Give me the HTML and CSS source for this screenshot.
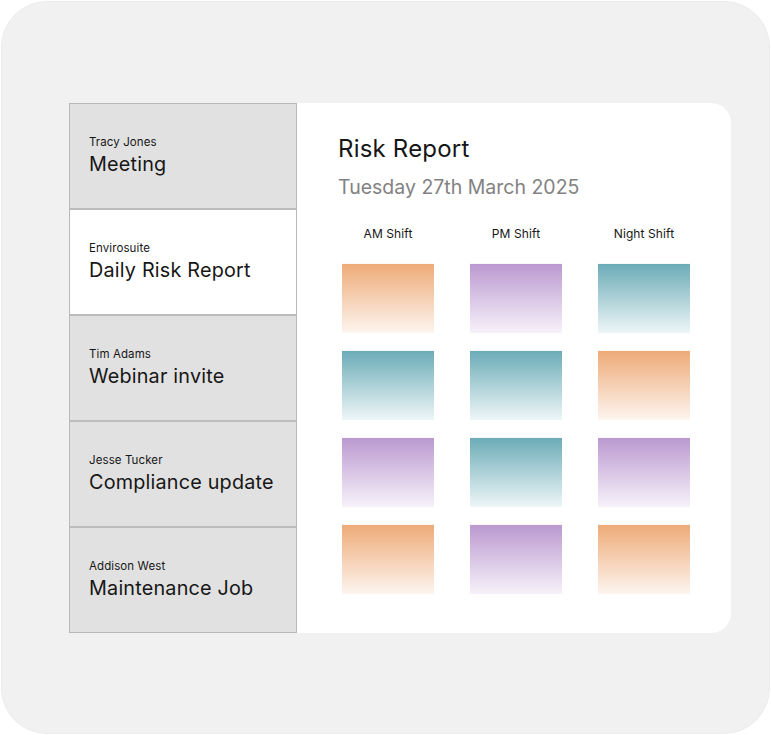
FILE: index.html
```html
<!DOCTYPE html>
<html>
<head>
<meta charset="utf-8">
<link rel="stylesheet" href="styles.css">
</head>
<body>
<div class="frame">
  <div class="app">
    <ul class="inbox">
      <li class="item"><span class="from">Tracy Jones</span><span class="subject">Meeting</span></li>
      <li class="item active"><span class="from">Envirosuite</span><span class="subject">Daily Risk Report</span></li>
      <li class="item"><span class="from">Tim Adams</span><span class="subject">Webinar invite</span></li>
      <li class="item"><span class="from">Jesse Tucker</span><span class="subject">Compliance update</span></li>
      <li class="item"><span class="from">Addison West</span><span class="subject">Maintenance Job</span></li>
    </ul>
    <section class="report">
      <h1 class="title">Risk Report</h1>
      <p class="date">Tuesday 27th March 2025</p>
      <div class="grid">
        <div class="head">AM Shift</div>
        <div class="head">PM Shift</div>
        <div class="head">Night Shift</div>
        <div class="tile orange"></div>
        <div class="tile purple"></div>
        <div class="tile teal"></div>
        <div class="tile teal"></div>
        <div class="tile teal"></div>
        <div class="tile orange"></div>
        <div class="tile purple"></div>
        <div class="tile teal"></div>
        <div class="tile purple"></div>
        <div class="tile orange"></div>
        <div class="tile purple"></div>
        <div class="tile orange"></div>
      </div>
    </section>
  </div>
</div>
</body>
</html>
```
FILE: styles.css
```css
* { box-sizing: border-box; }
html, body { margin: 0; padding: 0; background: #ffffff; }
body {
  font-family: Inter, "Liberation Sans", sans-serif;
  color: #161616;
  width: 771px;
  height: 735px;
  overflow: hidden;
}
.frame {
  margin: 1px;
  width: 769px;
  height: 733px;
  border-radius: 46px;
  background: #f1f1f1;
  border: 1px solid #ececec;
  padding: 101px 0 0 67px;
}
.app {
  display: flex;
  height: 530px;
  width: 662px;
}
.inbox {
  list-style: none;
  margin: 0;
  padding: 0;
  width: 228px;
  display: flex;
  flex-direction: column;
  border: 1px solid #b9b9b9;
}
.item {
  flex: 1;
  display: flex;
  flex-direction: column;
  justify-content: center;
  padding: 0 0 0 19px;
  background: #e1e1e1;
  border-top: 2px solid #bcbcbc;
}
.item:first-child { border-top: none; }
.item.active { background: #ffffff; }
.from {
  font-size: 11.5px;
  line-height: 14px;
  letter-spacing: 0.1px;
  margin-bottom: 3px;
  margin-top: -2px;
}
.subject {
  font-size: 19.8px;
  line-height: 24px;
  letter-spacing: 0.2px;
}
.report {
  flex: 1;
  background: #ffffff;
  border-radius: 0 20px 20px 0;
  padding: 31px 0 0 41px;
}
.title {
  margin: 0;
  font-size: 24px;
  line-height: 30px;
  font-weight: 400;
  letter-spacing: 0.2px;
}
.date {
  margin: 11px 0 0;
  font-size: 19.5px;
  line-height: 24px;
  color: #828282;
  letter-spacing: 0;
}
.grid {
  margin: 28px 0 0 4px;
  display: grid;
  grid-template-columns: 92px 92px 92px;
  column-gap: 36px;
  row-gap: 17px;
}
.head {
  font-size: 12px;
  line-height: 14px;
  text-align: center;
  letter-spacing: 0.1px;
  margin-bottom: 5px;
}
.tile {
  height: 70px;
  border-top: 1px solid rgba(255,255,255,0.35);
}
.orange { background: linear-gradient(#eeab78, #fdf5ef); }
.purple { background: linear-gradient(#bb99d0, #f7f2fa); }
.teal { background: linear-gradient(#6cacb7, #eef6f8); }
```
